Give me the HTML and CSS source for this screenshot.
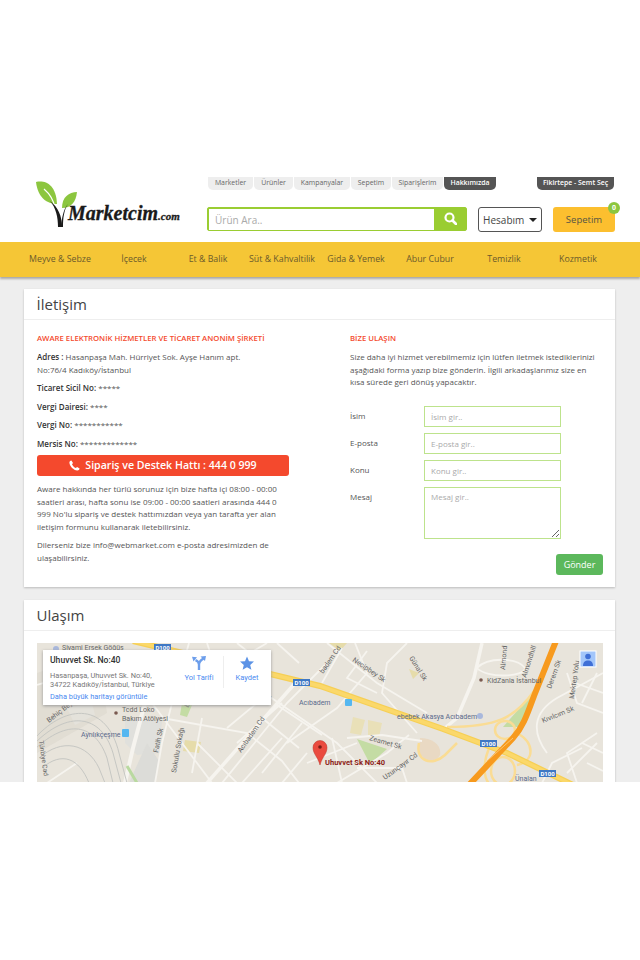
FILE: index.html
```html
<!DOCTYPE html>
<html lang="tr">
<head>
    <meta charset="utf-8">
    <title>İletişim - Marketcim</title>
    <link rel="stylesheet" href="styles.css">
</head>
<body>
<header class="header">
    <a class="logo" href="#">
        <svg class="logo-plant" width="42" height="50" viewBox="0 0 42 50">
            <path d="M0 2C9 0 20 4 21 24C11 24 2 18 0 2Z" fill="#8cc63f"/>
            <path d="M41 12C33 12 26 17 26 28C35 28 40 22 41 12Z" fill="#8cc63f"/>
            <path d="M8 9C15 15 18 22 19 28" fill="none" stroke="#fff" stroke-width="1.2"/>
            <path d="M14 21C20 28 22 37 22 47L26 47C26 36 22 27 14 21Z" fill="#1a1a1a"/>
            <path d="M32 24C27 30 26 38 25 47L27 47C27 38 28 30 32 24Z" fill="#1a1a1a"/>
        </svg>
        <span class="logo-text">Marketcim<small>.com</small></span>
    </a>
    <div class="header-right">
        <div class="top-links">
            <ul class="tabs">
                <li class="tab-1">Marketler</li>
                <li class="tab-2">Ürünler</li>
                <li class="tab-3">Kampanyalar</li>
                <li class="tab-4">Sepetim</li>
                <li class="tab-5">Siparişlerim</li>
                <li class="tab-6 dark">Hakkımızda</li>
            </ul>
            <div class="tab-semt">Fikirtepe - Semt Seç</div>
        </div>
        <div class="tools">
            <div class="search">
                <input type="text" placeholder="Ürün Ara..">
                <button type="button">
                    <svg width="13" height="13" viewBox="0 0 13 13"><circle cx="5.5" cy="5.5" r="4" fill="none" stroke="#fff" stroke-width="2.2"/><path d="M8.5 8.5L12 12" stroke="#fff" stroke-width="2.6" stroke-linecap="round"/></svg>
                </button>
            </div>
            <button type="button" class="account">Hesabım <span class="caret"></span></button>
            <div class="cart">Sepetim<span class="badge">0</span></div>
        </div>
    </div>
</header>

<nav class="nav">
    <a href="#">Meyve &amp; Sebze</a>
    <a href="#">İçecek</a>
    <a href="#">Et &amp; Balik</a>
    <a href="#">Süt &amp; Kahvaltilik</a>
    <a href="#">Gida &amp; Yemek</a>
    <a href="#">Abur Cubur</a>
    <a href="#">Temizlik</a>
    <a href="#">Kozmetik</a>
</nav>

<main class="content">
    <section class="card">
        <h1>İletişim</h1>
        <div class="contact">
            <div class="col-left">
                <h2>AWARE ELEKTRONİK HİZMETLER VE TİCARET ANONİM ŞİRKETİ</h2>
                <p class="info"><b>Adres :</b> Hasanpaşa Mah. Hürriyet Sok. Ayşe Hanım apt.<br>No:76/4 Kadıköy/İstanbul</p>
                <p class="info"><b>Ticaret Sicil No:</b> *****</p>
                <p class="info"><b>Vergi Dairesi:</b> ****</p>
                <p class="info"><b>Vergi No:</b> ***********</p>
                <p class="info"><b>Mersis No:</b> *************</p>
                <div class="hotline">
                    <svg width="11" height="11" viewBox="0 0 11 11"><path d="M2.4.4L4 2.9 3 4.2C3.5 5.6 5.2 7.4 6.8 8L8.1 7 10.6 8.6C10.5 9.8 9.4 10.7 8.2 10.6 4.4 10.1.9 6.6.4 2.8.3 1.6 1.2.5 2.4.4Z" fill="#fff"/></svg>
                    Sipariş ve Destek Hattı : 444 0 999
                </div>
                <p>Aware hakkında her türlü sorunuz için bize hafta içi 08:00 - 00:00<br>saatleri arası, hafta sonu ise 09:00 - 00:00 saatleri arasında 444 0<br>999 No'lu sipariş ve destek hattımızdan veya yan tarafta yer alan<br>iletişim formunu kullanarak iletebilirsiniz.</p>
                <p>Dilerseniz bize info@webmarket.com e-posta adresimizden de<br>ulaşabilirsiniz.</p>
            </div>
            <div class="col-right">
                <h2>BİZE ULAŞIN</h2>
                <p>Size daha iyi hizmet verebilmemiz için lütfen iletmek istediklerinizi<br>aşağıdaki forma yazıp bize gönderin. İlgili arkadaşlarımız size en<br>kısa sürede geri dönüş yapacaktır.</p>
                <form class="form">
                    <label>İsim</label><input type="text" placeholder="İsim gir..">
                    <label>E-posta</label><input type="text" placeholder="E-posta gir..">
                    <label>Konu</label><input type="text" placeholder="Konu gir..">
                    <label>Mesaj</label><textarea placeholder="Mesaj gir.."></textarea>
                </form>
                <div class="send-row"><button type="button" class="send">Gönder</button></div>
            </div>
        </div>
    </section>

    <section class="card">
        <h1>Ulaşım</h1>
        <div class="map">
            <svg class="map-img" width="566" height="140" viewBox="0 0 566 140">
                <rect width="566" height="140" fill="#e8e4db"/>
                <!-- parks and blocks -->
                <path d="M496 50L483 84 466 84Z" fill="#c4dca4"/>
                <path d="M320 96L350 106 333 121Z" fill="#c4dca4"/>
                <path d="M145 60L155 62 150 74 143 72Z" fill="#c4dca4"/>
                <path d="M148 97L164 99 162 110 146 108Z" fill="#e6dcaa"/>
                <path d="M316 74L328 77 324 92 313 90Z M331 77L345 80 342 94 331 92Z" fill="#e9e0b8"/>
                <path d="M292 0L310 0 303 8Z M372 26L382 30 376 36Z" fill="#e6dcaa"/>
                <path d="M88 75L125 78 122 110 100 112 88 100Z" fill="#e0e0dc"/>
                <path d="M110 100L122 118 118 140 92 140Z" fill="#dcdcd8"/>
                <path d="M30 65L55 60 58 72 38 82Z" fill="#eeeeea"/>
                <path d="M0 30L60 10 70 70 0 110Z" fill="#d9d5cc" opacity=".5"/>
                <path d="M383 95C395 95 405 102 403 112 398 122 383 118 382 106Z" fill="#e9d9c3"/>
                <!-- streets -->
                <g fill="none" stroke="#f6f4ef" stroke-width="1.800">
                    <path d="M0 42L40 30 80 20 120 8"/>
                    <path d="M152 0L135 60 125 100 118 140"/>
                    <path d="M125 75L210 90 245 118 262 140"/>
                    <path d="M185 140L250 60 290 20"/>
                    <path d="M220 45L300 100 340 140"/>
                    <path d="M265 80L225 130 M245 95L205 140 M270 110L245 140"/>
                    <path d="M200 100L245 60 M190 85L232 50 M225 75L262 105 M240 62L285 92"/>
                    <path d="M250 100L300 65 330 30 318 0"/>
                    <path d="M290 0L340 40 390 70 M305 5L285 40 M330 8L310 35 340 50"/>
                    <path d="M370 0L350 20 345 50 380 90"/>
                    <path d="M310 95L345 92 385 98"/>
                    <path d="M270 120L320 100 M295 95L305 140 M320 125L365 125 370 140"/>
                    <path d="M300 140L350 110 372 92"/>
                    <path d="M170 0L180 30 230 0 M190 20L225 45 M200 0L215 12 M240 0L262 20"/>
                    <path d="M440 25C450 14 480 14 488 25 488 34 450 36 440 25Z"/>
                    <path d="M540 140L530 110 560 90 M505 140L515 120 545 105"/>
                    <path d="M510 110C495 90 495 70 520 55L566 30"/>
                    <path d="M530 30L540 60 566 70"/>
                    <path d="M545 100L566 110 M550 120L566 128 M530 130L560 100 M538 40L566 50 M545 60L560 30"/>
                    <path d="M100 40L175 140 M160 100L200 140 M165 75L155 130"/>
                    <path d="M40 120L10 140 M8 60L50 35"/>
                </g>
                <path d="M445 0L437 35 420 75 408 85" fill="none" stroke="#f6f4ef" stroke-width="3.500"/>
                <path d="M108 60L96 105 88 140" fill="none" stroke="#f6f4ef" stroke-width="4"/>
                <path d="M260 38L170 140" fill="none" stroke="#f6f4ef" stroke-width="3.500"/>
                <!-- rail yard -->
                <g fill="none" stroke="#c6c7c3" stroke-width="1">
                    <path d="M-2 95C30 60 70 60 82 110L90 140"/>
                    <path d="M-2 100C30 68 64 70 76 110L84 140"/>
                    <path d="M-2 106C30 76 58 80 70 115L76 140"/>
                    <path d="M2 115C25 95 50 100 62 125L68 140"/>
                    <path d="M5 125C25 108 42 115 52 140"/>
                </g>
                <path d="M90 123L100 140" fill="none" stroke="#b9d9a0" stroke-width="3"/>
                <!-- ramps -->
                <g fill="none" stroke="#fadc94" stroke-width="2.500">
                    <path d="M497 48C478 75 460 84 410 84"/>
                    <ellipse cx="468" cy="87" rx="10" ry="9"/>
                    <path d="M382 100C378 118 395 124 408 112L420 100"/>
                    <path d="M480 90C498 100 498 118 480 122"/>
                    <path d="M452 105C444 125 448 140 455 142"/>
                    <ellipse cx="466" cy="128" rx="12" ry="14"/>
                </g>
                <!-- D100 -->
                <path d="M96 -2L283 43 406 86 470 110 536 142" fill="none" stroke="#f6cf55" stroke-width="6"/>
                <path d="M96 -2L283 43 406 86 470 110 536 142" fill="none" stroke="#fbd86a" stroke-width="3.500"/>
                <!-- otoyol -->
                <path d="M519 -2L497 53C490 72 486 84 476 95L432 142" fill="none" stroke="#f79a1e" stroke-width="6"/>
                <path d="M476 95L450 118" fill="none" stroke="#fbc36f" stroke-width="1"/>
                <!-- shields -->
                <g class="shield">
                    <rect x="117" y="1" width="17" height="7"/><text x="125.500" y="7">D100</text>
                    <rect x="256" y="36" width="17" height="7"/><text x="264.500" y="42">D100</text>
                    <rect x="443" y="97" width="17" height="7"/><text x="451.500" y="103">D100</text>
                    <rect x="502" y="127" width="17" height="7"/><text x="510.500" y="133">D100</text>
                </g>
                <!-- labels -->
                <g class="lbl">
                    <circle cx="19" cy="6" r="3" fill="#a9b8dc"/>
                    <text x="25" y="7">Siyami Ersek Göğüs</text>
                    <circle cx="79" cy="70" r="1.800" fill="#7a5a50"/>
                    <text x="85" y="69">Tcdd Loko</text>
                    <text x="85" y="78">Bakım Atölyesi</text>
                    <text class="metro" x="44" y="94">Ayrılıkçeşme</text>
                    <rect x="85" y="86" width="7" height="8" rx="1" fill="#55b7f0"/>
                    <text class="metro" x="262" y="62">Acıbadem</text>
                    <rect x="308" y="56" width="7" height="7" rx="1" fill="#55b7f0"/>
                    <circle cx="444" cy="37" r="1.800" fill="#7a5a50"/>
                    <text x="450" y="40">KidZania İstanbul</text>
                    <text class="metro" x="360" y="76">ebebek Akasya Acıbadem</text>
                    <circle cx="443" cy="73" r="3" fill="#a9b8dc"/>
                    <text class="metro" x="478" y="138">Ünalan</text>
                    <text transform="translate(12 80) rotate(-38)">Behiç Bey</text>
                    <text class="small" transform="translate(2 98) rotate(82)">Tünbiye Cad</text>
                    <text transform="translate(121 110) rotate(-78)">Fatih Sk</text>
                    <text transform="translate(139 130) rotate(-80)">Sokullu Sokağı</text>
                    <text transform="translate(204 110) rotate(-55)">Acıbadem Cd</text>
                    <text transform="translate(151 65) rotate(-60)">Bağ</text>
                    <text transform="translate(230 60) rotate(-55)">Sk</text>
                    <text transform="translate(286 31) rotate(-55)">badem Cd</text>
                    <text transform="translate(315 18) rotate(34)">Necipbey Sk</text>
                    <text transform="translate(372 15) rotate(58)">Günal Sk</text>
                    <text transform="translate(332 97) rotate(16)">Zeamet Sk</text>
                    <text transform="translate(348 137) rotate(-36)">Uzunçayır Cd</text>
                    <text transform="translate(506 80) rotate(-22)">Kıvılcım Sk</text>
                    <text transform="translate(514 46) rotate(-70)">Derem Sk</text>
                    <text transform="translate(537 56) rotate(-82)">Mektep Yolu</text>
                    <text transform="translate(489 35) rotate(-72)">Almondhill</text>
                    <text transform="translate(468 27) rotate(-85)">Almond</text>
                </g>
                <!-- pin -->
                <path d="M283 122C281 114 276 111 276 104.500A7 7 0 0 1 290 104.500C290 111 285 114 283 122Z" fill="#ea4b3f" stroke="#b8342a" stroke-width=".5"/>
                <circle cx="283" cy="104" r="1.800" fill="#7a1d16"/>
                <text class="pin-lbl" x="288" y="122">Uhuvvet Sk No:40</text>
                <!-- person -->
                <rect x="543" y="8" width="16" height="16" fill="#a3c6fa" stroke="#fff"/>
                <circle cx="551" cy="13.500" r="2.800" fill="#3f6fd6"/>
                <path d="M546 23C546 19 548 17.500 551 17.500 554 17.500 556 19 556 23Z" fill="#3f6fd6"/>
            </svg>
            <div class="place">
                <div class="place-info">
                    <strong>Uhuvvet Sk. No:40</strong>
                    <span>Hasanpaşa, Uhuvvet Sk. No:40,<br>34722 Kadıköy/İstanbul, Türkiye</span>
                    <a href="#">Daha büyük haritayı görüntüle</a>
                </div>
                <a class="place-act" href="#">
                    <svg width="14" height="14" viewBox="0 0 14 14"><path d="M7 14V8.500C7 6.500 5.500 5 3.500 4.200M7 8.500C7 6 9 4 11.500 2.500" fill="none" stroke="#6d9eeb" stroke-width="2.400"/><path d="M0 .8L5 1.200 1.500 5.500Z M8.500 .5L14 0 13 5Z" fill="#6d9eeb"/></svg>
                    Yol Tarifi
                </a>
                <a class="place-act save" href="#">
                    <svg width="14" height="14" viewBox="0 0 14 14"><path d="M7 .5L9 5.200 14 5.600 10.200 8.900 11.400 13.800 7 11.200 2.600 13.800 3.800 8.900 0 5.600 5 5.200Z" fill="#5c93e6"/></svg>
                    Kaydet
                </a>
            </div>
        </div>
    </section>
</main>
</body>
</html>
```

FILE: styles.css
```css
* {
    box-sizing: border-box;
}
body {
    margin: 0;
    background-color: #fff;
    font-family: "Open Sans", sans-serif;
    font-size: 8px;
    line-height: 12.500px;
    color: #555;
}
input, textarea, button {
    font-family: "Open Sans", sans-serif;
}
input::placeholder, textarea::placeholder {
    color: #aaa;
    opacity: 1;
}

/* header */
.header {
    display: flex;
    height: 242px;
    padding: 177px 0 0 36px;
}
.logo {
    display: flex;
    align-items: flex-end;
    width: 171px;
    height: 53px;
    text-decoration: none;
}
.logo-plant {
    flex: none;
    margin-top: 3px;
}
.logo-text {
    margin-left: -10px;
    padding-bottom: 2px;
    font-family: "Liberation Serif", serif;
    font-style: italic;
    font-weight: 700;
    font-size: 20px;
    line-height: 24px;
    color: #1a1a1a;
    -webkit-text-stroke: .3px #1a1a1a;
}
.logo-text small {
    font-size: 11px;
}
.header-right {
    width: 408px;
}
.top-links {
    display: flex;
    justify-content: space-between;
    height: 13px;
    padding-left: 1px;
}
.tabs {
    display: flex;
    gap: 1px;
    margin: 0;
    padding: 0;
    list-style: none;
}
.tabs li, .tab-semt {
    height: 13px;
    border-radius: 0 0 5px 5px;
    background-color: #eee;
    font-size: 6.900px;
    line-height: 12px;
    text-align: center;
    white-space: nowrap;
    color: #666;
}
.tab-1 { width: 45px; }
.tab-2 { width: 39px; }
.tab-3 { width: 56px; }
.tab-4 { width: 40px; }
.tab-5 { width: 51px; }
.tabs .tab-6 { width: 52px; }
.tabs .dark, .tab-semt {
    background-color: #555;
    color: #fff;
    font-weight: 600;
}
.tab-semt {
    width: 77px;
    margin-right: 1px;
}
.tools {
    display: flex;
    align-items: flex-start;
    margin-top: 16px;
}
.search {
    display: flex;
    width: 260px;
    height: 24px;
    margin-top: 1px;
    border: 1px solid #9acd32;
    border-radius: 2px;
}
.search input {
    flex: 1;
    min-width: 0;
    padding: 0 6px;
    border: 0;
    border-top: 1px solid #9acd32;
    border-left: 1px solid #9acd32;
    background: #fff;
    font-size: 10px;
    outline: none;
}
.search button {
    width: 32px;
    padding: 2px 0 0;
    border: 0;
    background-color: #9acd32;
}
.account {
    width: 64px;
    height: 25px;
    margin: 1px 0 0 11px;
    padding: 0;
    border: 1px solid #555;
    border-radius: 3px;
    background-color: #fff;
    font-size: 10px;
    color: #444;
}
.caret {
    display: inline-block;
    margin-left: 2px;
    border-top: 4px solid #222;
    border-left: 4px solid transparent;
    border-right: 4px solid transparent;
    vertical-align: 2px;
}
.cart {
    position: relative;
    width: 62px;
    height: 25px;
    margin: 1px 0 0 11px;
    border-radius: 3px;
    background-color: #fcbf2f;
    font-size: 9.500px;
    line-height: 25px;
    text-align: center;
    color: #554;
}
.badge {
    position: absolute;
    top: -5px;
    right: -5px;
    width: 12px;
    height: 12px;
    border-radius: 50%;
    background-color: #8cc63f;
    font-size: 7px;
    font-weight: 700;
    line-height: 12px;
    color: #fff;
}

/* kategori menu */
.nav {
    display: grid;
    grid-template-columns: repeat(8, 74px);
    height: 35px;
    padding-left: 23px;
    background-color: #f5c636;
    box-shadow: 0 2px 2px #aaa;
    position: relative;
}
.nav a {
    font-size: 8.800px;
    line-height: 35px;
    text-align: center;
    white-space: nowrap;
    text-decoration: none;
    color: #6b5a2c;
}

/* icerik */
.content {
    height: 505px;
    padding: 12px 25px 0 24px;
    background-color: #eee;
    overflow: hidden;
}
.card {
    margin-bottom: 13px;
    background-color: #fff;
    box-shadow: 0 1px 2px #bbb;
}
.card h1 {
    margin: 0;
    height: 31px;
    padding-left: 12.500px;
    border-bottom: 1px solid #eee;
    font-size: 15px;
    font-weight: 400;
    line-height: 31px;
    color: #444;
}
.contact {
    display: flex;
    height: 267px;
    padding: 12px 12px 0 13px;
}
.col-left {
    width: 252px;
    white-space: nowrap;
}
.col-right {
    width: 253px;
    margin-left: 61px;
    white-space: nowrap;
}
.contact h2 {
    margin: 0 0 7px;
    height: 12px;
    font-size: 7.750px;
    font-weight: 600;
    line-height: 12px;
    color: #f4492d;
}
.contact p {
    margin: 0 0 6px;
}
.contact b {
    font-weight: 600;
    color: #333;
}
.hotline {
    display: flex;
    justify-content: center;
    align-items: center;
    gap: 5px;
    height: 21px;
    margin: -1.500px 0 7.500px;
    border-radius: 3px;
    background-color: #f4492d;
    font-size: 10.600px;
    font-weight: 600;
    color: #fff;
}
.form {
    display: grid;
    grid-template-columns: 74px 137px;
    gap: 6px 0;
    margin-top: 17.500px;
}
.form label {
    padding-top: 4px;
    color: #555;
}
.form input, .form textarea {
    display: block;
    width: 137px;
    height: 21px;
    padding: 0 6px;
    border: 1px solid #bde38c;
    background-color: #fff;
    font-size: 8px;
    outline: none;
}
.form textarea {
    height: 52px;
    padding-top: 3px;
}
.send-row {
    display: flex;
    justify-content: flex-end;
    margin-top: 15px;
}
.send {
    width: 47px;
    height: 21px;
    padding: 0;
    border: 0;
    border-radius: 3px;
    background-color: #5cb85c;
    font-size: 9px;
    color: #fff;
}

/* harita */
.map {
    position: relative;
    height: 140px;
    margin: 12px 12px 0 13px;
    overflow: hidden;
}
.map-img {
    display: block;
}
.lbl text {
    font-family: Roboto, sans-serif;
    font-size: 7px;
    fill: #666;
}
.lbl .small {
    font-size: 6.500px;
}
.lbl .metro {
    fill: #5a6a8c;
}
.shield rect {
    fill: #3f78c4;
}
.shield text {
    font-family: Roboto, sans-serif;
    font-size: 6px;
    font-weight: 700;
    text-anchor: middle;
    fill: #fff;
}
.pin-lbl {
    font-family: Roboto, sans-serif;
    font-size: 7.500px;
    font-weight: 700;
    fill: #8c1d18;
}
.place {
    position: absolute;
    top: 7px;
    left: 6px;
    display: flex;
    width: 228px;
    height: 55px;
    background-color: #fff;
    box-shadow: 0 1px 3px #999;
    font-family: Roboto, sans-serif;
}
.place-info {
    width: 132px;
    padding: 5px 0 0 7px;
    white-space: nowrap;
    font-size: 7.400px;
    line-height: 9px;
    color: #777;
}
.place-info strong {
    display: block;
    margin-bottom: 5px;
    font-size: 8.600px;
    font-weight: 500;
    line-height: 11px;
    color: #333;
}
.place-info span {
    display: block;
    margin-bottom: 3px;
}
.place-info a {
    color: #4a8af0;
    text-decoration: none;
}
.place-act {
    display: flex;
    flex-direction: column;
    align-items: center;
    gap: 3px;
    width: 48px;
    height: 32px;
    margin-top: 6px;
    font-size: 7.500px;
    line-height: 9px;
    text-decoration: none;
    color: #4a8af0;
}
.place-act.save {
    border-left: 1px solid #eee;
    width: 47px;
}
```
